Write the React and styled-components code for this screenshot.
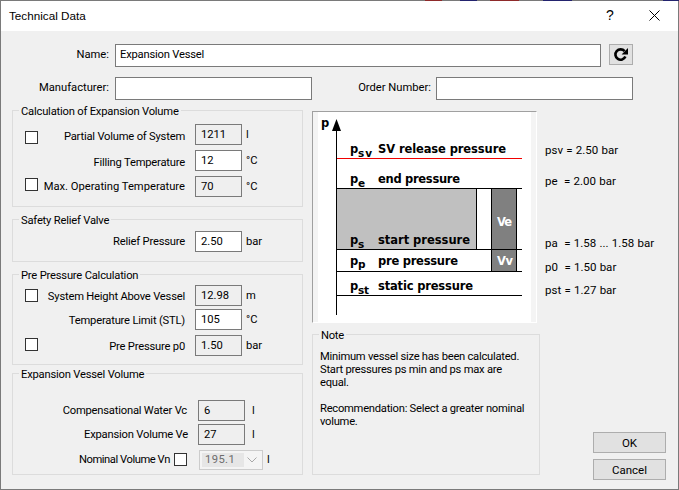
import React from "react";
import styled, { createGlobalStyle } from "styled-components";

const GlobalStyle = createGlobalStyle`
    html, body {
        margin: 0;
        padding: 0;
        background: #f0f0f0;
    }
    body {
        font-family: Roboto, "Liberation Sans", Arial, sans-serif;
        font-size: 11.2px;
        letter-spacing: -0.2px;
        color: #000;
    }
`;

const Window = styled.div`
    width: 679px;
    height: 490px;
    box-sizing: border-box;
    padding: 1px;
    background-color: #7a7a7a;
    background-image:
        linear-gradient(90deg, #7a7a7a 425px, #8e2a2a 425px, #8e2a2a 442px, #7a7a7a 442px, #7a7a7a 460px, #23236e 460px, #23236e 477px, #7a7a7a 477px, #7a7a7a 490px, #8e2a2a 490px, #8e2a2a 519px, #7a7a7a 519px, #7a7a7a 543px, #23236e 543px, #23236e 572px, #7a7a7a 572px, #7a7a7a 663px, #23236e 663px);
    background-size: 100% 1px;
    background-repeat: no-repeat;
`;

const Dialog = styled.div`
    height: 100%;
    background: #f0f0f0;
    display: flex;
    flex-direction: column;
`;

const TitleBar = styled.div`
    height: 30px;
    box-sizing: border-box;
    background: #fff;
    display: flex;
    align-items: center;
    padding: 0 18px 2px 8px;
    font-family: "Liberation Sans", Arial, sans-serif;
    font-size: 11.7px;
    letter-spacing: 0;
`;

const Title = styled.span`
    flex: 1;
`;

const HelpGlyph = styled.span`
    width: 43px;
    font-size: 14px;
`;

const Body = styled.div`
    padding: 13px 0 0 11px;
    display: flex;
    flex-direction: column;
    gap: 10px;
`;

const FormRow = styled.div`
    width: 621px;
    height: 23px;
    display: flex;
    align-items: center;
`;

const FormLabel = styled.label`
    width: ${p => p.$width || 97}px;
    margin-right: ${p => p.$gap || 6}px;
    padding-bottom: 3px;
    text-align: right;
    white-space: nowrap;
    letter-spacing: 0;
`;

const TextInput = styled.div`
    width: ${p => p.$width}px;
    height: 23px;
    box-sizing: border-box;
    border: 1px solid #7a7a7a;
    background: #fff;
    padding: 0 4px 2px;
    display: flex;
    align-items: center;
`;

const RefreshButton = styled.button`
    width: 24px;
    height: 21px;
    margin: 0 0 2px 8px;
    padding: 0;
    border: 1px solid #adadad;
    background: #e1e1e1;
    display: flex;
    align-items: center;
    justify-content: center;
`;

const Main = styled.div`
    display: flex;
    gap: 9px;
`;

const LeftColumn = styled.div`
    width: 291px;
`;

const GroupBox = styled.section`
    position: relative;
    height: ${p => p.$height}px;
    box-sizing: border-box;
    border: 1px solid #dcdcdc;
    margin-top: ${p => p.$top || 0}px;
    padding: ${p => p.$pad}px 0 0 12px;
`;

const GroupTitle = styled.h3`
    position: absolute;
    top: -6px;
    left: 6px;
    margin: 0;
    padding: 0 2px;
    background: #f0f0f0;
    font-size: 11.2px;
    font-weight: 400;
    line-height: 14px;
    white-space: nowrap;
`;

const FieldRow = styled.div`
    display: grid;
    grid-template-columns: 13px 157px 47px auto;
    height: 21px;
    align-items: center;
    margin-top: ${p => p.$top || 0}px;
`;

const VolumeRow = styled.div`
    display: grid;
    grid-template-columns: 173px 47px auto;
    height: 21px;
    align-items: center;
    margin-top: ${p => p.$top || 0}px;
`;

const NominalRow = styled.div`
    display: flex;
    height: 21px;
    align-items: center;
    margin-top: 4px;
`;

const CheckBox = styled.span`
    display: block;
    flex: none;
    width: 13px;
    height: 13px;
    box-sizing: border-box;
    border: 1px solid #333;
    background: #fff;
    align-self: start;
    margin-top: ${p => p.$top}px;
`;

const RowLabel = styled.span`
    grid-column: ${p => p.$column || "auto"};
    padding-right: ${p => p.$right || 10}px;
    padding-top: ${p => p.$drop || 0}px;
    letter-spacing: ${p => (p.$wide ? "0" : "inherit")};
    text-align: right;
    white-space: nowrap;
`;

const NominalLabel = styled.span`
    width: 145px;
    margin-right: 4px;
    letter-spacing: -0.45px;
    text-align: right;
    white-space: nowrap;
`;

const ValueBox = styled.span`
    height: 21px;
    box-sizing: border-box;
    border: 1px solid #7a7a7a;
    background: ${p => (p.$readOnly ? "#efefef" : "#fff")};
    padding: 0 0 1px 5px;
    letter-spacing: 0;
    display: flex;
    align-items: center;
`;

const Unit = styled.span`
    padding-left: ${p => p.$left || 4}px;
    letter-spacing: 0;
`;

const ComboBox = styled.span`
    width: 64px;
    height: 20px;
    margin-left: 12px;
    box-sizing: border-box;
    border: 1px solid #cccccc;
    background: #f4f4f4;
    display: flex;
    align-items: center;
    justify-content: space-between;
    padding: 2px 5px 2px 2px;
    color: #6d6d6d;
    letter-spacing: 0.4px;
`;

const ComboText = styled.span`
    width: 42px;
    height: 100%;
    background: #e6e6e6;
    padding-left: 3px;
    box-sizing: border-box;
    display: flex;
    align-items: center;
`;

const RightColumn = styled.div`
    width: 354px;
    display: flex;
    flex-direction: column;
    gap: 11px;
`;

const DiagramRow = styled.div`
    display: flex;
    gap: 8px;
    margin-top: 1px;
`;

const DiagramFrame = styled.div`
    width: 225px;
    height: 212px;
    box-sizing: border-box;
    border-top: 1px solid #a0a0a0;
    border-left: 1px solid #a0a0a0;
    border-right: 1px solid #fff;
    border-bottom: 1px solid #fff;
    padding-left: 5px;
    background: #f4f4f4;
    svg {
        display: block;
    }
`;

const Values = styled.div`
    display: flex;
    flex-direction: column;
    font-size: 11.5px;
    letter-spacing: 0;
    word-spacing: 0.4px;
    line-height: 14px;
`;

const Value = styled.div`
    margin-top: ${p => p.$top}px;
    white-space: pre;
`;

const BottomRow = styled.div`
    display: flex;
    height: 141px;
`;

const NoteBox = styled(GroupBox)`
    width: 228px;
    padding: 15px 0 0 7px;
    line-height: 13px;
    letter-spacing: -0.25px;
    white-space: nowrap;
`;

const Buttons = styled.div`
    margin-left: 53px;
    padding-top: 98px;
    display: flex;
    flex-direction: column;
    gap: 6px;
`;

const PushButton = styled.button`
    flex: none;
    width: 73px;
    height: 21px;
    padding: 0;
    border: 1px solid #adadad;
    background: #e1e1e1;
    font-family: inherit;
    font-size: 11.5px;
    color: #000;
`;

const Label = styled.text`
    font-family: "DejaVu Sans", sans-serif;
    font-weight: 700;
    font-size: 11.5px;
    letter-spacing: 0;
    fill: ${p => p.$fill || "#000"};
`;

const Sub = styled(Label)`
    font-size: 10.5px;
`;

const Pressure = ({ sub, subWidth, y, subY, name, width, x = 378 }) => (
    <>
        <Label x="350" y={y}>p</Label>
        <Sub x="358" y={subY} textLength={subWidth}>{sub}</Sub>
        <Label x={x} y={y} textLength={width}>{name}</Label>
    </>
);

const PressureDiagram = () => (
    <svg width="213" height="210" viewBox="318 112 213 210">
        <rect x="318" y="112" width="213" height="210" fill="#fff" />
        <g shapeRendering="crispEdges">
            <rect x="337" y="189" width="140" height="60" fill="#c0c0c0" />
            <rect x="491" y="189" width="26" height="82" fill="#808080" />
            <rect x="336" y="127" width="1" height="188" fill="#000" />
            <rect x="337" y="158" width="185" height="1" fill="#f00000" />
            <rect x="337" y="188" width="185" height="1" fill="#000" />
            <rect x="337" y="249" width="185" height="1" fill="#000" />
            <rect x="337" y="271" width="185" height="1" fill="#000" />
            <rect x="337" y="295" width="185" height="1" fill="#000" />
            <rect x="476" y="189" width="1" height="60" fill="#000" />
            <rect x="491" y="189" width="1" height="82" fill="#000" />
            <rect x="516" y="189" width="1" height="82" fill="#000" />
        </g>
        <polygon points="336.5,119 341,131 332,131" fill="#000" />
        <Label x="321" y="127">p</Label>
        <Pressure sub="sv" subWidth="14" y="153" subY="157" name="SV release pressure" width="128" />
        <Pressure sub="e" subWidth="7" y="183" subY="187" name="end pressure" width="82" />
        <Pressure sub="s" subWidth="7" y="244" subY="248" name="start pressure" width="92" />
        <Pressure sub="p" subWidth="7" y="265" subY="268" name="pre pressure" width="80" />
        <Pressure sub="st" subWidth="11" y="290" subY="294" name="static pressure" width="95" />
        <Label x="497" y="226" $fill="#fff" textLength="15">Ve</Label>
        <Label x="497" y="265" $fill="#fff" textLength="16">Vv</Label>
    </svg>
);

const App = () => (
    <Window>
        <GlobalStyle />
        <Dialog>
            <TitleBar>
                <Title>Technical Data</Title>
                <HelpGlyph>?</HelpGlyph>
                <svg width="11" height="11" viewBox="0 0 11 11">
                    <path d="M0.5 0.5 L10.5 10.5 M10.5 0.5 L0.5 10.5" stroke="#000" strokeWidth="1" fill="none" />
                </svg>
            </TitleBar>
            <Body>
                <FormRow>
                    <FormLabel>Name:</FormLabel>
                    <TextInput $width={486}>Expansion Vessel</TextInput>
                    <RefreshButton aria-label="Refresh">
                        <svg width="16" height="15" viewBox="0 0 16 15">
                            <path d="M11.6 4.2 A5.2 5.2 0 1 0 12.4 9.6" stroke="#000" strokeWidth="2.6" fill="none" />
                            <polygon points="15,1 15,7.4 8.6,7.4" fill="#000" />
                        </svg>
                    </RefreshButton>
                </FormRow>
                <FormRow>
                    <FormLabel>Manufacturer:</FormLabel>
                    <TextInput $width={197} />
                    <FormLabel $width={119} $gap={5}>Order Number:</FormLabel>
                    <TextInput $width={197} />
                </FormRow>
                <Main>
                    <LeftColumn>
                        <GroupBox $height={97} $pad={13}>
                            <GroupTitle>Calculation of Expansion Volume</GroupTitle>
                            <FieldRow>
                                <CheckBox $top={7} />
                                <RowLabel $drop={4}>Partial Volume of System</RowLabel>
                                <ValueBox $readOnly>1211</ValueBox>
                                <Unit>l</Unit>
                            </FieldRow>
                            <FieldRow $top={5}>
                                <RowLabel $column={2} $drop={3}>Filling Temperature</RowLabel>
                                <ValueBox>12</ValueBox>
                                <Unit>°C</Unit>
                            </FieldRow>
                            <FieldRow $top={5}>
                                <CheckBox $top={2} />
                                <RowLabel $wide>Max. Operating Temperature</RowLabel>
                                <ValueBox $readOnly>70</ValueBox>
                                <Unit>°C</Unit>
                            </FieldRow>
                        </GroupBox>
                        <GroupBox $height={43} $top={12} $pad={11}>
                            <GroupTitle>Safety Relief Valve</GroupTitle>
                            <FieldRow>
                                <RowLabel $column={2}>Relief Pressure</RowLabel>
                                <ValueBox>2.50</ValueBox>
                                <Unit>bar</Unit>
                            </FieldRow>
                        </GroupBox>
                        <GroupBox $height={91} $top={12} $pad={10}>
                            <GroupTitle>Pre Pressure Calculation</GroupTitle>
                            <FieldRow>
                                <CheckBox $top={4} />
                                <RowLabel $drop={2}>System Height Above Vessel</RowLabel>
                                <ValueBox $readOnly>12.98</ValueBox>
                                <Unit>m</Unit>
                            </FieldRow>
                            <FieldRow $top={3}>
                                <RowLabel $column={2} $drop={2}>Temperature Limit (STL)</RowLabel>
                                <ValueBox>105</ValueBox>
                                <Unit>°C</Unit>
                            </FieldRow>
                            <FieldRow $top={5}>
                                <CheckBox $top={3} />
                                <RowLabel $drop={2}>Pre Pressure p0</RowLabel>
                                <ValueBox $readOnly>1.50</ValueBox>
                                <Unit>bar</Unit>
                            </FieldRow>
                        </GroupBox>
                        <GroupBox $height={102} $top={8} $pad={26}>
                            <GroupTitle>Expansion Vessel Volume</GroupTitle>
                            <VolumeRow>
                                <RowLabel $right={11}>Compensational Water Vc</RowLabel>
                                <ValueBox $readOnly>6</ValueBox>
                                <Unit $left={7}>l</Unit>
                            </VolumeRow>
                            <VolumeRow $top={3}>
                                <RowLabel $right={10}>Expansion Volume Ve</RowLabel>
                                <ValueBox $readOnly>27</ValueBox>
                                <Unit $left={7}>l</Unit>
                            </VolumeRow>
                            <NominalRow>
                                <NominalLabel>Nominal Volume Vn</NominalLabel>
                                <CheckBox $top={4} />
                                <ComboBox>
                                    <ComboText>195.1</ComboText>
                                    <svg width="10" height="6" viewBox="0 0 10 6">
                                        <path d="M0.5 0.5 L5 5 L9.5 0.5" stroke="#a8a8a8" fill="none" />
                                    </svg>
                                </ComboBox>
                                <Unit>l</Unit>
                            </NominalRow>
                        </GroupBox>
                    </LeftColumn>
                    <RightColumn>
                        <DiagramRow>
                            <DiagramFrame>
                                <PressureDiagram />
                            </DiagramFrame>
                            <Values>
                                <Value $top={32}>psv = 2.50 bar</Value>
                                <Value $top={17}>pe  = 2.00 bar</Value>
                                <Value $top={48}>pa  = 1.58 ... 1.58 bar</Value>
                                <Value $top={10}>p0  = 1.50 bar</Value>
                                <Value $top={9}>pst = 1.27 bar</Value>
                            </Values>
                        </DiagramRow>
                        <BottomRow>
                            <NoteBox $height={141}>
                                <GroupTitle>Note</GroupTitle>
                                Minimum vessel size has been calculated.<br />
                                Start pressures ps min and ps max are<br />
                                equal.<br />
                                <br />
                                Recommendation: Select a greater nominal<br />
                                volume.
                            </NoteBox>
                            <Buttons>
                                <PushButton>OK</PushButton>
                                <PushButton>Cancel</PushButton>
                            </Buttons>
                        </BottomRow>
                    </RightColumn>
                </Main>
            </Body>
        </Dialog>
    </Window>
);

export default App;
